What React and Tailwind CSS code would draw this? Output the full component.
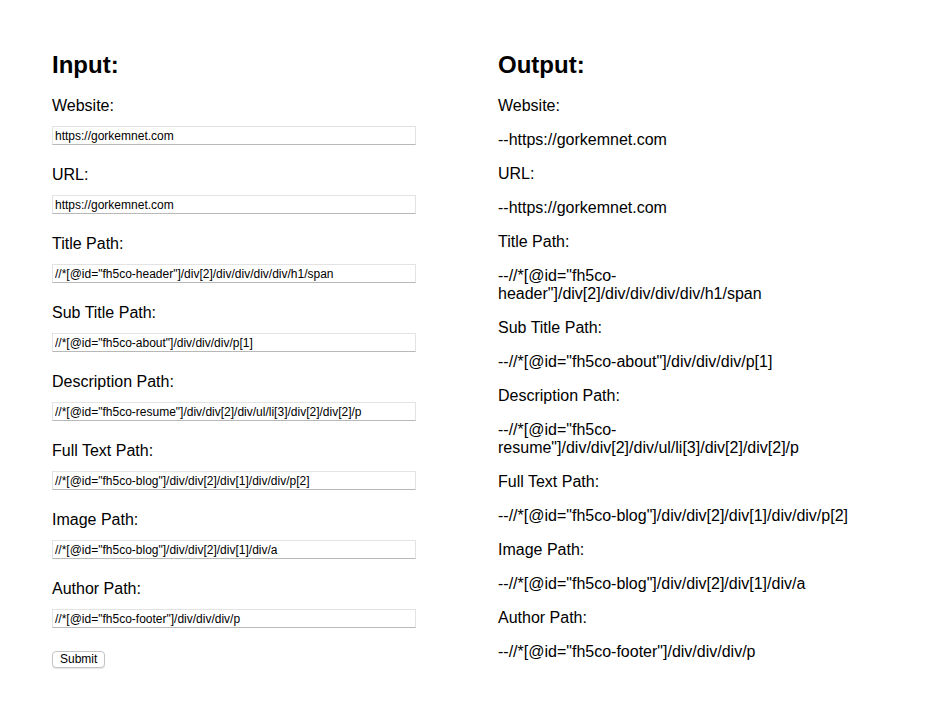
// Input/Output XPath form page
const fields = [
  { label: 'Website:', value: 'https://gorkemnet.com' },
  { label: 'URL:', value: 'https://gorkemnet.com' },
  { label: 'Title Path:', value: '//*[@id="fh5co-header"]/div[2]/div/div/div/div/h1/span' },
  { label: 'Sub Title Path:', value: '//*[@id="fh5co-about"]/div/div/div/p[1]' },
  { label: 'Description Path:', value: '//*[@id="fh5co-resume"]/div/div[2]/div/ul/li[3]/div[2]/div[2]/p' },
  { label: 'Full Text Path:', value: '//*[@id="fh5co-blog"]/div/div[2]/div[1]/div/div/p[2]' },
  { label: 'Image Path:', value: '//*[@id="fh5co-blog"]/div/div[2]/div[1]/div/a' },
  { label: 'Author Path:', value: '//*[@id="fh5co-footer"]/div/div/div/p' },
];

export default function App() {
  return (
    <div className="min-h-screen bg-white text-black font-['Liberation_Sans',Arial,sans-serif]">
      <div className="grid grid-cols-[446px_370px] pl-[52px] pt-[51px]">
        {/* Input */}
        <div>
          <h2 className="text-[24px] leading-[28px] font-bold mb-[18px]">Input:</h2>
          {fields.map(f => (
            <div key={f.label} className="mb-[21px]">
              <label className="block text-[16px] leading-[18px] mb-[11px]">{f.label}</label>
              <input
                type="text"
                defaultValue={f.value}
                className="block w-[364px] h-[19px] px-[2px] text-[12px] leading-[17px] text-black border border-[#e3e3e3] border-b-[#b8b8b8] bg-white outline-none"
              />
            </div>
          ))}
          <button className="block mt-[23px] h-[17px] px-[7px] text-[12px] leading-[15px] border border-[#c4c4c4] rounded-[4px] bg-white shadow-[0_1px_1px_rgba(0,0,0,0.1)]">
            Submit
          </button>
        </div>

        {/* Output */}
        <div>
          <h2 className="text-[24px] leading-[28px] font-bold mb-[18px]">Output:</h2>
          {fields.map(f => (
            <div key={f.label}>
              <p className="text-[16px] leading-[18px] mb-[16px]">{f.label}</p>
              <p className="text-[16px] leading-[18px] mb-[16px] break-words">--{f.value}</p>
            </div>
          ))}
        </div>
      </div>
    </div>
  );
}
